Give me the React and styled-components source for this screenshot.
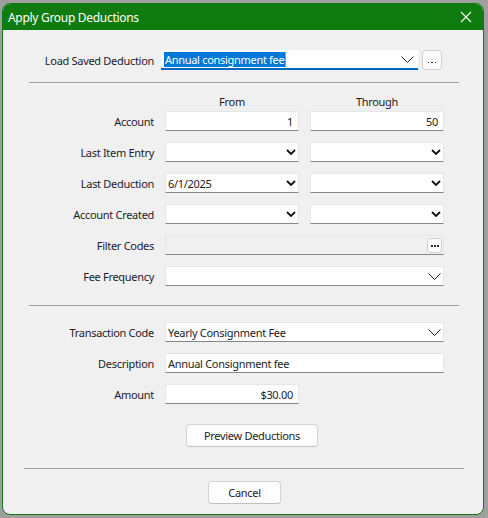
import React from "react";
import styled, { createGlobalStyle } from "styled-components";

const GlobalStyle = createGlobalStyle`
  html, body {
    margin: 0;
    padding: 0;
    background: #9f9f9f;
  }
  body {
    font-family: "Segoe UI", "Noto Sans", sans-serif;
    font-size: 11px;
    letter-spacing: -0.3px;
    color: #1c1c28;
  }
`;

export const Window = styled.div`
  width: 480px;
  height: 510px;
  margin: 3px 0 0 2px;
  border: 1px solid #107c10;
  border-radius: 8px;
  background: #f0f0f0;
  overflow: hidden;
  display: flex;
  flex-direction: column;
`;

export const TitleBar = styled.div`
  height: 26px;
  background: #107c10;
  color: #ffffff;
  display: flex;
  align-items: center;
  justify-content: space-between;
  padding: 0 10px 0 5px;
  flex-shrink: 0;
  font-size: 12px;
  letter-spacing: -0.3px;
`;

export const CloseButton = styled.div`
  width: 14px;
  height: 14px;
  display: flex;
  align-items: center;
  justify-content: center;
`;

export const Body = styled.div`
  display: flex;
  flex-direction: column;
  padding-top: ${(p) => p.$top || 0}px;
`;

export const Row = styled.div`
  display: flex;
  align-items: center;
  height: 20px;
  margin-top: ${(p) => p.$mt || 0}px;
`;

export const Label = styled.div`
  width: 151px;
  text-align: right;
  margin-right: ${(p) => p.$gap || 11}px;
  white-space: nowrap;
`;

export const Field = styled.div`
  box-sizing: border-box;
  width: ${(p) => p.$w}px;
  height: 20px;
  background: ${(p) => (p.$disabled ? "#f0f0f0" : "#ffffff")};
  border: 1px solid #e6e6e6;
  border-bottom: 1px solid #878787;
  display: flex;
  align-items: center;
  justify-content: ${(p) => (p.$right ? "flex-end" : "space-between")};
  padding: 0 ${(p) => p.$pr ?? 5}px 0 2px;
  margin-right: ${(p) => p.$mr || 0}px;
  white-space: nowrap;
`;

export const Combo = styled.div`
  box-sizing: border-box;
  width: 257px;
  height: 20px;
  background: #ffffff;
  border-bottom: 2px solid #0067c0;
  display: flex;
  align-items: center;
  justify-content: space-between;
  padding: 0 4px 0 3px;
  margin-right: 4px;
`;

export const Selected = styled.span`
  background: #0078d7;
  color: #ffffff;
  padding: 0 1px;
  line-height: 15px;
  border-right: 1px solid #ff8c00;
`;

export const EllipsisButton = styled.div`
  box-sizing: border-box;
  width: ${(p) => p.$size}px;
  height: ${(p) => p.$size}px;
  border: 1px solid #cfcfcf;
  border-radius: 4px;
  background: #fdfdfd;
  display: flex;
  align-items: flex-end;
  justify-content: center;
  gap: ${(p) => p.$dot}px;
  padding-bottom: ${(p) => p.$pb}px;
  margin-right: ${(p) => p.$mr || 0}px;
`;

export const Dot = styled.span`
  width: ${(p) => p.$d}px;
  height: ${(p) => p.$d}px;
  background: #2a2a40;
  display: block;
`;

export const Separator = styled.div`
  height: 1px;
  background: #a0a0a0;
  margin-top: ${(p) => p.$mt}px;
  margin-bottom: ${(p) => p.$mb}px;
  margin-left: ${(p) => p.$ml}px;
  width: ${(p) => p.$w}px;
`;

export const HeaderRow = styled.div`
  display: flex;
  padding-left: 162px;
  height: 16px;
  align-items: center;
`;

export const HeaderCell = styled.div`
  width: ${(p) => p.$w}px;
  text-align: center;
`;

export const ButtonRow = styled.div`
  display: flex;
  padding-left: ${(p) => p.$pl}px;
  margin-top: ${(p) => p.$mt || 0}px;
`;

export const PushButton = styled.div`
  box-sizing: border-box;
  width: ${(p) => p.$w}px;
  height: 23px;
  border: 1px solid #d2d2d2;
  border-bottom-color: #c0c0c0;
  border-radius: 4px;
  background: #fdfdfd;
  display: flex;
  align-items: center;
  justify-content: center;
`;

const BoldChevron = () => (
  <svg width="10" height="6" viewBox="0 0 10 6">
    <path d="M1 1 L5 5 L9 1" fill="none" stroke="#111" strokeWidth="1.8" />
  </svg>
);

const ThinChevron = () => (
  <svg width="13" height="7" viewBox="0 0 13 7">
    <path d="M0.5 0.5 L6.5 6.5 L12.5 0.5" fill="none" stroke="#222" strokeWidth="1" />
  </svg>
);

const Ellipsis = ({ small, mr }) =>
  small ? (
    <EllipsisButton $size={15} $dot={1} $pb={5} $mr={mr}>
      <Dot $d={2} />
      <Dot $d={2} />
      <Dot $d={2} />
    </EllipsisButton>
  ) : (
    <EllipsisButton $size={20} $dot={2} $pb={6}>
      <Dot $d={1.5} />
      <Dot $d={1.5} />
      <Dot $d={1.5} />
    </EllipsisButton>
  );

const DatePair = ({ label, from, mt }) => (
  <Row $mt={mt}>
    <Label>{label}</Label>
    <Field $w={134} $mr={11} $pr={2}>
      <span>{from}</span>
      <BoldChevron />
    </Field>
    <Field $w={134} $pr={2}>
      <span />
      <BoldChevron />
    </Field>
  </Row>
);

export default function App() {
  return (
    <>
      <GlobalStyle />
      <Window>
        <TitleBar>
          <span>Apply Group Deductions</span>
          <CloseButton>
            <svg width="12" height="12" viewBox="0 0 12 12">
              <path d="M1 1 L11 11 M11 1 L1 11" stroke="#fff" strokeWidth="1.1" />
            </svg>
          </CloseButton>
        </TitleBar>

        <Body $top={20}>
          <Row>
            <Label $gap={7}>Load Saved Deduction</Label>
            <Combo>
              <Selected>Annual consignment fee</Selected>
              <ThinChevron />
            </Combo>
            <Ellipsis />
          </Row>

          <Separator $mt={12} $mb={10} $ml={26} $w={430} />

          <HeaderRow>
            <HeaderCell $w={134}>From</HeaderCell>
            <HeaderCell $w={11} />
            <HeaderCell $w={134}>Through</HeaderCell>
          </HeaderRow>

          <Row $mt={2}>
            <Label>Account</Label>
            <Field $w={134} $mr={11} $right>
              1
            </Field>
            <Field $w={134} $right>
              50
            </Field>
          </Row>

          <DatePair label="Last Item Entry" mt={11} />
          <DatePair label="Last Deduction" from="6/1/2025" mt={11} />
          <DatePair label="Account Created" mt={11} />

          <Row $mt={11}>
            <Label>Filter Codes</Label>
            <Field $w={279} $disabled $pr={0}>
              <span />
              <Ellipsis small mr={1} />
            </Field>
          </Row>

          <Row $mt={11}>
            <Label>Fee Frequency</Label>
            <Field $w={279} $pr={2}>
              <span />
              <ThinChevron />
            </Field>
          </Row>

          <Separator $mt={19} $mb={16} $ml={26} $w={430} />

          <Row>
            <Label>Transaction Code</Label>
            <Field $w={279} $pr={2}>
              <span>Yearly Consignment Fee</span>
              <ThinChevron />
            </Field>
          </Row>

          <Row $mt={11}>
            <Label>Description</Label>
            <Field $w={279}>
              <span>Annual Consignment fee</span>
            </Field>
          </Row>

          <Row $mt={11}>
            <Label>Amount</Label>
            <Field $w={134} $right>
              $30.00
            </Field>
          </Row>

          <ButtonRow $pl={183} $mt={20}>
            <PushButton $w={132}>Preview Deductions</PushButton>
          </ButtonRow>

          <Separator $mt={21} $mb={12} $ml={21} $w={440} />

          <ButtonRow $pl={205}>
            <PushButton $w={73}>Cancel</PushButton>
          </ButtonRow>
        </Body>
      </Window>
    </>
  );
}
